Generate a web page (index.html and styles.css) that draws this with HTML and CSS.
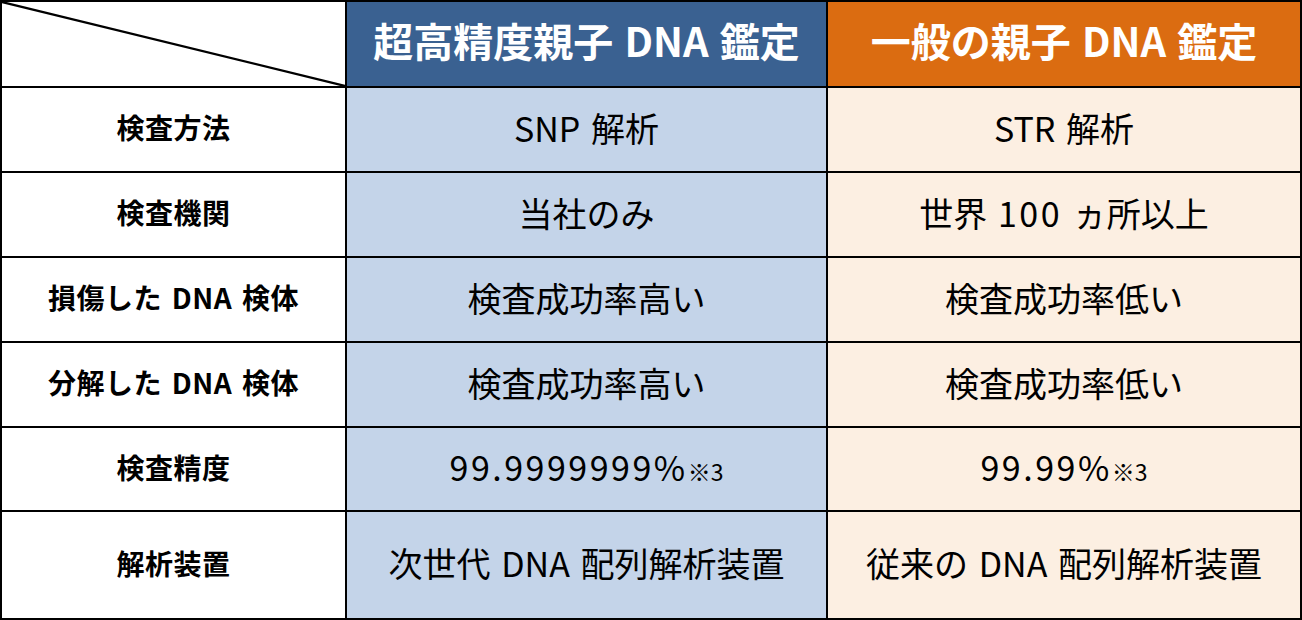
FILE: index.html
```html
<!DOCTYPE html>
<html lang="ja">
<head>
<meta charset="utf-8">
<link rel="stylesheet" href="styles.css">
</head>
<body>
<div class="table">
  <div class="cell corner">
    <svg class="diag" viewBox="0 0 343 84" preserveAspectRatio="none"><line x1="0" y1="0" x2="343" y2="84" stroke="#000" stroke-width="2.2"/></svg>
  </div>
  <div class="cell head blue"><span>超高精度親子 DNA 鑑定</span></div>
  <div class="cell head orange"><span>一般の親子 DNA 鑑定</span></div>

  <div class="cell label"><span>検査方法</span></div>
  <div class="cell val lblue"><span>SNP 解析</span></div>
  <div class="cell val lorange"><span>STR 解析</span></div>

  <div class="cell label"><span>検査機関</span></div>
  <div class="cell val lblue"><span>当社のみ</span></div>
  <div class="cell val lorange"><span>世界 <span class="num">100</span> ヵ所以上</span></div>

  <div class="cell label"><span>損傷した DNA 検体</span></div>
  <div class="cell val lblue"><span>検査成功率高い</span></div>
  <div class="cell val lorange"><span>検査成功率低い</span></div>

  <div class="cell label"><span>分解した DNA 検体</span></div>
  <div class="cell val lblue"><span>検査成功率高い</span></div>
  <div class="cell val lorange"><span>検査成功率低い</span></div>

  <div class="cell label"><span>検査精度</span></div>
  <div class="cell val lblue"><span><span class="num">99.9999999%</span><span class="note">※3</span></span></div>
  <div class="cell val lorange"><span><span class="num">99.99%</span><span class="note">※3</span></span></div>

  <div class="cell label"><span>解析装置</span></div>
  <div class="cell val lblue"><span>次世代 DNA 配列解析装置</span></div>
  <div class="cell val lorange"><span>従来の DNA 配列解析装置</span></div>
</div>
</body>
</html>
```

FILE: styles.css
```css
html, body {
  margin: 0;
  padding: 0;
  background: #fff;
}
.table {
  width: 1302px;
  height: 620px;
  box-sizing: border-box;
  display: grid;
  grid-template-columns: 343px 479px 472px;
  grid-template-rows: 84px 83px 83px 83px 83px 82px 106px;
  gap: 2px;
  padding: 2px;
  background: #000;
  font-family: "Noto Sans CJK JP", "Noto Sans", sans-serif;
}
.cell {
  display: flex;
  align-items: center;
  justify-content: center;
  background: #fff;
  color: #000;
  white-space: nowrap;
  padding-bottom: 5px;
  box-sizing: border-box;
}
.corner {
  display: block;
  padding: 0;
}
.diag {
  display: block;
  width: 100%;
  height: 100%;
}
.head {
  color: #fff;
  font-weight: 700;
  font-size: 40px;
  letter-spacing: 0;
  word-spacing: 2px;
  padding-bottom: 8px;
}
.blue { background: #3a6191; }
.orange { background: #db6c11; }
.lblue { background: #c4d4e9; }
.lorange { background: #fcefe2; }
.label {
  font-weight: 700;
  font-size: 28px;
  word-spacing: 3px;
  letter-spacing: 0.5px;
}
.val {
  font-size: 34px;
  font-weight: 400;
  word-spacing: 3px;
}
.num {
  letter-spacing: 2.5px;
}
.note {
  font-size: 23px;
  letter-spacing: 0;
}
```
